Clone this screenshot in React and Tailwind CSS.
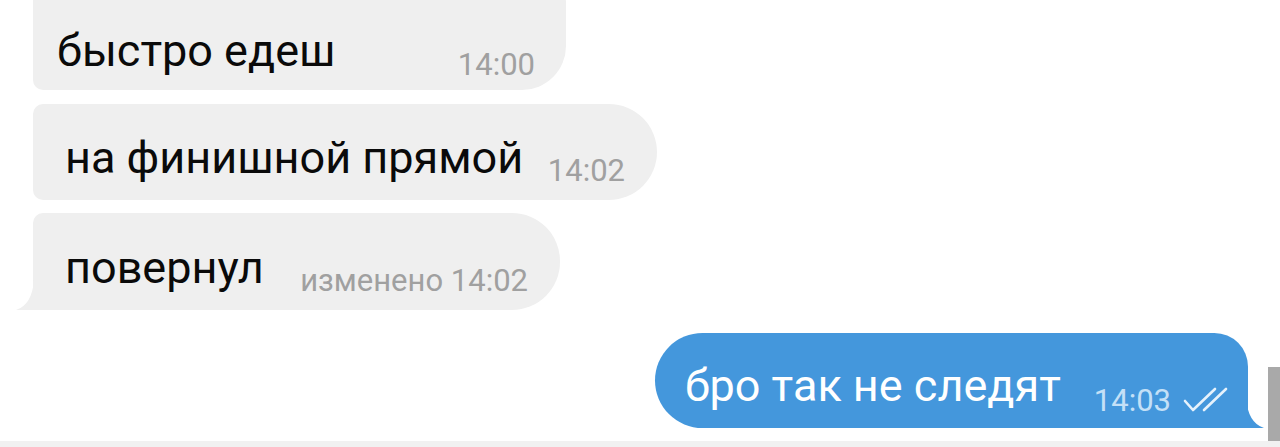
import React from "react";

function Time({ children, blue }) {
  return (
    <span
      className={
        "text-[31px] leading-none whitespace-nowrap " +
        (blue ? "text-[#c4e0f7]" : "text-[#a0a0a0]")
      }
    >
      {children}
    </span>
  );
}

function DoubleCheck() {
  return (
    <svg width="48" height="28" viewBox="0 0 48 28" fill="none" className="ml-[11px] mb-[1px]">
      <path d="M3 14 L11 23 L33 2" stroke="#e6f2fc" strokeWidth="2.6" strokeLinecap="round" strokeLinejoin="round" />
      <path d="M22 23 L44 2" stroke="#e6f2fc" strokeWidth="2.6" strokeLinecap="round" strokeLinejoin="round" />
    </svg>
  );
}

export default function App() {
  return (
    <div
      className="relative flex h-[447px] w-full flex-col overflow-hidden bg-white"
      style={{ fontFamily: "Roboto, 'Noto Sans', sans-serif" }}
    >
      <div className="flex flex-1 flex-col">
        {/* incoming */}
        <div className="ml-[33px] mt-[-6px] flex h-[96px] w-[533px] items-end rounded-tr-[8px] rounded-br-[44px] rounded-bl-[10px] bg-[#efefef] pb-[17px] pl-[24px] pr-[31px]">
          <span className="text-[45px] leading-none text-[#0a0a0a]">быстро едеш</span>
          <span className="ml-auto mb-[-9px]"><Time>14:00</Time></span>
        </div>

        <div className="ml-[33px] mt-[14px] flex h-[96px] w-[624px] items-end rounded-l-[10px] rounded-r-[48px] bg-[#efefef] pb-[20px] pl-[32px] pr-[32px]">
          <span className="text-[45px] leading-none text-[#0a0a0a]">на финишной прямой</span>
          <span className="ml-auto mb-[-8px]"><Time>14:02</Time></span>
        </div>

        <div className="relative ml-[33px] mt-[13px] flex h-[97px] w-[527px] items-end rounded-tl-[10px] rounded-r-[48px] bg-[#efefef] pb-[20px] pl-[32px] pr-[32px]">
          <svg width="18" height="30" viewBox="0 0 18 30" className="absolute bottom-0 left-[-17px]">
            <path d="M18 0 Q16 25 0 30 L18 30 Z" fill="#efefef" />
          </svg>
          <span className="text-[45px] leading-none text-[#0a0a0a]">повернул</span>
          <span className="ml-auto mb-[-8px]"><Time>изменено 14:02</Time></span>
        </div>

        {/* outgoing */}
        <div className="relative ml-[655px] mt-[23px] flex h-[95px] w-[593px] items-end rounded-l-[48px] rounded-tr-[34px] bg-[#4497dc] pb-[20px] pl-[30px] pr-[18px]">
          <span className="text-[45px] leading-none text-white">бро так не следят</span>
          <span className="ml-auto mb-[-8px] flex items-end">
            <Time blue>14:03</Time>
            <DoubleCheck />
          </span>
          <svg width="18" height="30" viewBox="0 0 18 30" className="absolute bottom-0 right-[-16px]">
            <path d="M0 0 Q2 25 18 30 L0 30 Z" fill="#4497dc" />
          </svg>
        </div>
      </div>

      {/* scrollbar */}
      <div className="absolute right-0 top-[367px] h-[74px] w-[12px] bg-[#a9a9a9]" />

      <div className="h-[6px] w-full bg-[#f1f1f1]" />
    </div>
  );
}
